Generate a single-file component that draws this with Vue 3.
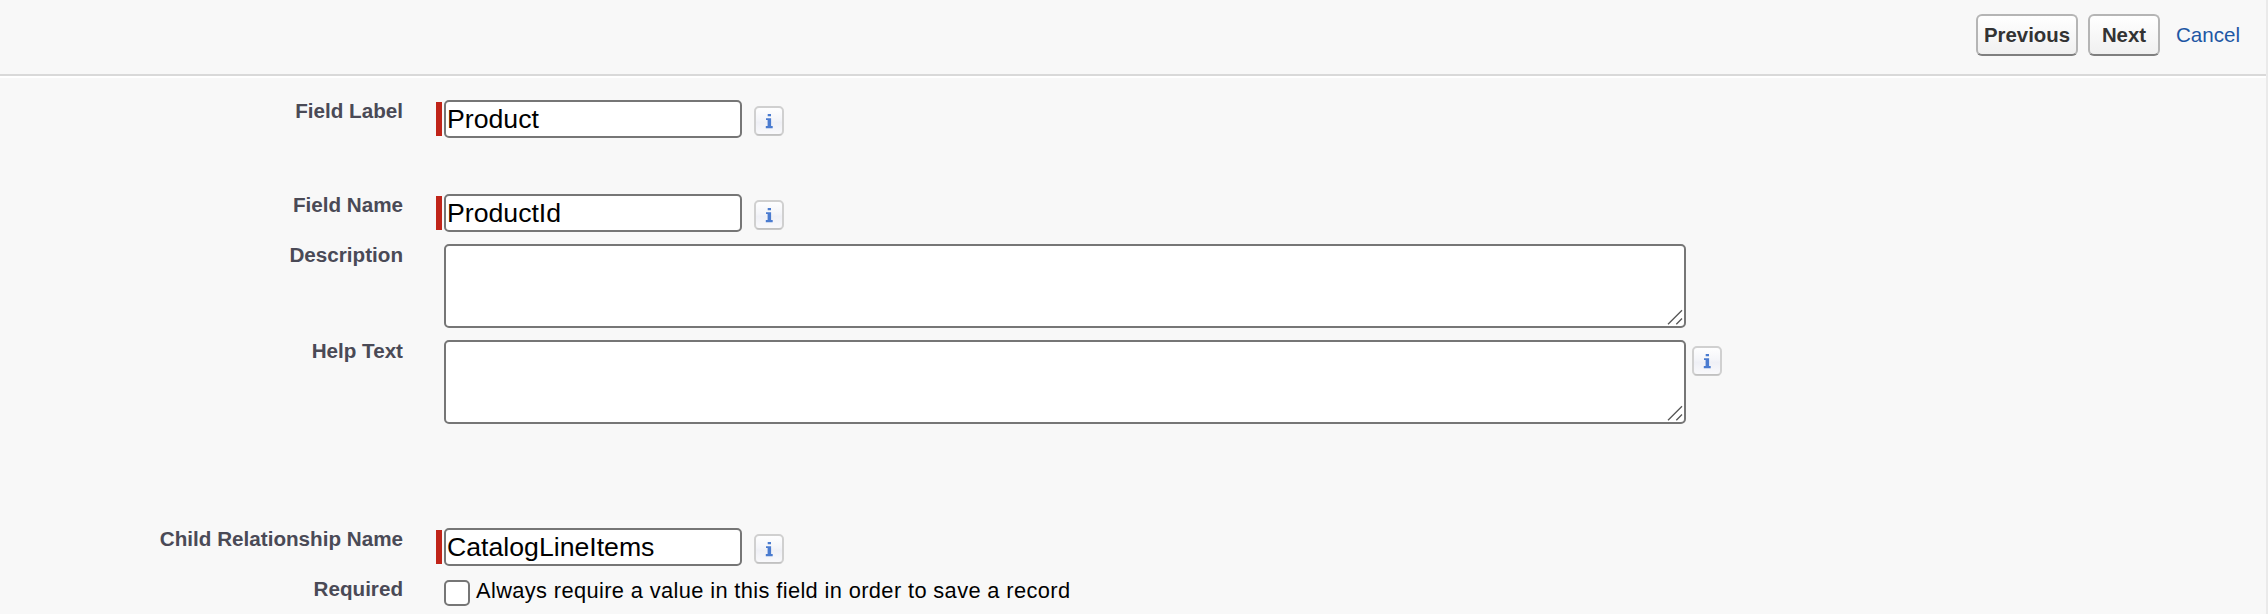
<script setup>
import { ref } from 'vue'

const fields = ref([
  { key: 'title', label: 'Field Label', type: 'text', value: 'Product', help: true },
  { key: 'name', label: 'Field Name', type: 'text', value: 'ProductId', help: true },
  { key: 'description', label: 'Description', type: 'area', value: '', help: false },
  { key: 'helptext', label: 'Help Text', type: 'area', value: '', help: true },
  { key: 'child', label: 'Child Relationship Name', type: 'text', value: 'CatalogLineItems', help: true },
  { key: 'required', label: 'Required', type: 'check', value: false, help: false },
])
</script>

<template>
  <main class="page">
    <header class="bar">
      <button class="btn previous" type="button">Previous</button>
      <button class="btn next" type="button">Next</button>
      <a class="cancel">Cancel</a>
    </header>
    <form class="form">
      <div v-for="f in fields" :key="f.key" class="row" :class="f.key">
        <label class="label" :for="f.key"><span>{{ f.label }}</span></label>
        <div class="control">
          <template v-if="f.type === 'text'">
            <i class="mark"></i>
            <input :id="f.key" v-model="f.value" class="text" type="text" spellcheck="false" />
          </template>
          <div v-else-if="f.type === 'area'" class="area-wrap">
            <textarea :id="f.key" v-model="f.value" class="area"></textarea>
            <svg class="grip" viewBox="0 0 16 16">
              <path d="M1 15.2 15 1.2M9.3 15.2 15 9.5" fill="none" stroke="#555" stroke-width="1.3" />
            </svg>
          </div>
          <template v-else>
            <input :id="f.key" v-model="f.value" class="check" type="checkbox" />
            <span class="check-text">Always require a value in this field in order to save a record</span>
          </template>
          <svg v-if="f.help" class="help" viewBox="0 0 30 30">
            <defs>
              <linearGradient :id="'g-' + f.key" x1="0" y1="0" x2="0" y2="1">
                <stop offset="0" stop-color="#fff" />
                <stop offset=".45" stop-color="#f4f5f9" />
                <stop offset=".55" stop-color="#eff0f6" />
                <stop offset="1" stop-color="#fafafc" />
              </linearGradient>
            </defs>
            <rect x="1" y="1" width="28" height="28" rx="4" :fill="`url(#g-${f.key})`" stroke="#d0d0d0" stroke-width="2" />
            <path d="M2.5 28.8H27.5" stroke="#bdbdbd" stroke-width="1.2" />
            <path d="M13.7 8H17V10.2H13.7ZM12 12.2H17.1V20H18.7V22.2H11.8V20H13.6V14H12Z" fill="#4a7bd0" />
          </svg>
        </div>
      </div>
    </form>
  </main>
</template>

<style>
html, body { background: #f8f8f8; overflow: hidden; }
</style>

<style scoped>
.page {
  box-sizing: border-box;
  height: 614px;
  border-right: 2px solid #eaeaea;
  background: #f8f8f8;
  font-family: "Liberation Sans", Arial, sans-serif;
  overflow: hidden;
}
.bar {
  box-sizing: border-box;
  display: flex;
  justify-content: flex-end;
  align-items: flex-start;
  height: 76px;
  padding: 14px 26px 0 0;
  border-bottom: 2px solid #d9d9d9;
}
.btn {
  box-sizing: border-box;
  height: 42px;
  margin: 0 10px 0 0;
  padding: 0 0 1px;
  border: 2px solid #b5b5b5;
  border-bottom-color: #7f7f7f;
  border-radius: 6px;
  background: linear-gradient(#fff, #f0f0f0);
  color: #333;
  font: bold 20.4px/36px "Liberation Sans", Arial, sans-serif;
  white-space: nowrap;
}
.previous { width: 102px; }
.next { width: 72px; margin-right: 0; }
.cancel {
  width: 64px;
  margin-left: 16px;
  color: #1e57a4;
  font-size: 20.6px;
  line-height: 42px;
}
.form {
  border-top: 2px solid #fff;
  padding-top: 22px;
}
.row { display: flex; height: 94px; }
.row.name { height: 50px; }
.row.description { height: 96px; }
.row.helptext { height: 188px; }
.row.child { height: 52px; }
.row.required { height: 34px; }
.label {
  width: 403px;
  margin-right: 33px;
  color: #4a4a56;
  font-size: 20.65px;
  font-weight: bold;
  line-height: 22px;
  text-align: right;
  white-space: nowrap;
}
.required .label { margin-top: -2px; }
.control { display: flex; align-items: flex-start; }
.mark {
  width: 6px;
  height: 34px;
  margin: 2px 2px 0 0;
  background: #c02419;
}
.text {
  box-sizing: border-box;
  width: 298px;
  height: 38px;
  margin: 0;
  padding: 0 1px;
  border: 2px solid #767676;
  border-radius: 5px;
  background: #fff;
  color: #000;
  font: 26.67px/30px "Liberation Sans", Arial, sans-serif;
  outline: none;
}
.area-wrap {
  position: relative;
  width: 1242px;
  height: 84px;
  margin-left: 8px;
}
.area {
  box-sizing: border-box;
  display: block;
  width: 100%;
  height: 100%;
  margin: 0;
  border: 2px solid #767676;
  border-radius: 5px;
  background: #fff;
  resize: none;
  outline: none;
}
.grip {
  position: absolute;
  right: 3px;
  bottom: 3px;
  width: 16px;
  height: 16px;
}
.help {
  width: 30px;
  height: 30px;
  margin: 6px 0 0 12px;
}
.helptext .help { margin-left: 6px; }
.check {
  appearance: none;
  box-sizing: border-box;
  width: 26px;
  height: 26px;
  margin: 0 6px 0 8px;
  border: 2px solid #767676;
  border-radius: 5px;
  background: #fff;
}
.check-text {
  color: #000;
  font-size: 21.84px;
  letter-spacing: .37px;
  line-height: 22px;
  white-space: nowrap;
}
</style>
